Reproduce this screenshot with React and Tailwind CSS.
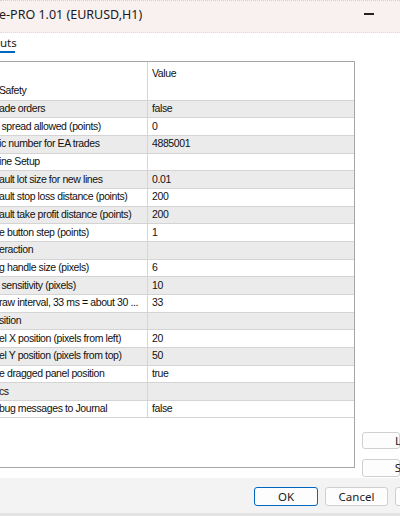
import React from 'react';

const rows = [
  ['Safety', ''],
  ['ade orders', 'false'],
  [' spread allowed (points)', '0'],
  ['ic number for EA trades', '4885001'],
  ['ine Setup', ''],
  ['ault lot size for new lines', '0.01'],
  ['ault stop loss distance (points)', '200'],
  ['ault take profit distance (points)', '200'],
  ['e button step (points)', '1'],
  ['eraction', ''],
  ['g handle size (pixels)', '6'],
  [' sensitivity (pixels)', '10'],
  ['raw interval, 33 ms = about 30 ...', '33'],
  ['sition', ''],
  ['el X position (pixels from left)', '20'],
  ['el Y position (pixels from top)', '50'],
  ['e dragged panel position', 'true'],
  ['cs', ''],
  ['bug messages to Journal', 'false'],
];

const App = () => {
  return (
    <div className="w-[400px] h-[516px] overflow-hidden bg-white flex flex-col text-[#1a1a1a]" style={{ fontFamily: '"Liberation Sans", Arial, sans-serif' }}>
      {/* Title bar */}
      <div className="h-[33px] shrink-0 bg-[#f9f0f0] border-t border-[#d4d0d0] border-b border-dotted border-b-[#e2dada] flex items-center justify-between pr-[26px]">
        <span className="text-[12.5px] -ml-[1px] pb-[2px]" style={{ fontFamily: '"Noto Sans", "Open Sans", sans-serif' }}>e-PRO 1.01 (EURUSD,H1)</span>
        <span className="w-[10px] h-[1.5px] bg-[#222] mb-[5px]"></span>
      </div>

      {/* Tab */}
      <div className="h-[20px] shrink-0 flex items-end">
        <div className="flex flex-col">
          <span className="text-[11.5px] leading-[14px]" style={{ fontFamily: '"Noto Sans", "Open Sans", sans-serif' }}>uts</span>
          <span className="h-[2px] w-[15px] bg-[#0067c0] mt-[1px]"></span>
        </div>
      </div>

      {/* Body */}
      <div className="flex flex-1 pt-[8px]">
        <div className="w-[355px] shrink-0 h-[407px] border-t border-r border-b border-[#a6a6a6] flex flex-col text-[10.5px] tracking-[-0.4px] text-[#111]">
          <div className="flex h-[21px] shrink-0">
            <div className="w-[148px] border-r border-[#d6d6d6]"></div>
            <div className="flex-1 pl-[4px] pt-[5px] leading-[13px]">Value</div>
          </div>
          {rows.map((r, i) => (
            <div
              key={i}
              className={`flex h-[17.67px] shrink-0 border-b border-[#d4d4d4] ${i % 2 === 1 ? 'bg-[#ebebeb]' : 'bg-white'}`}
            >
              <div className="w-[148px] border-r border-[#d6d6d6] flex items-center whitespace-pre overflow-hidden">
                <span className="-ml-[1px]">{r[0]}</span>
              </div>
              <div className="flex-1 pl-[4px] flex items-center">{r[1]}</div>
            </div>
          ))}
        </div>
        <div className="flex-1 flex flex-col justify-end gap-[10px] pl-[7px] pb-[1px]">
          <div className="h-[17px] border border-[#d0d0d0] rounded-[3px] bg-[#fdfdfd] flex items-center justify-end text-[11.5px]" style={{ fontFamily: '"Noto Sans", "Open Sans", sans-serif' }}>
            <span className="mr-[-2px]">L</span>
          </div>
          <div className="h-[18px] border border-[#d0d0d0] rounded-[3px] bg-[#fdfdfd] flex items-center justify-end text-[11.5px]" style={{ fontFamily: '"Noto Sans", "Open Sans", sans-serif' }}>
            <span className="mr-[-2px]">S</span>
          </div>
        </div>
      </div>

      {/* Footer */}
      <div className="h-[38px] shrink-0 bg-[#f3f3f3] border-b-[3px] border-[#e4e4e4] flex items-start pt-[9px] gap-[7px] pl-[254px] text-[11.5px]" style={{ fontFamily: '"Noto Sans", "Open Sans", sans-serif' }}>
        <div className="w-[64px] h-[19px] shrink-0 border border-[#0067c0] rounded-[3px] bg-[#fdfdfd] flex items-center justify-center">OK</div>
        <div className="w-[63px] h-[19px] shrink-0 border border-[#d0d0d0] rounded-[3px] bg-[#fdfdfd] flex items-center justify-center">Cancel</div>
        <div className="w-[40px] h-[19px] shrink-0 border border-[#d0d0d0] rounded-[3px] bg-[#fdfdfd]"></div>
      </div>
    </div>
  );
};

export default App;
